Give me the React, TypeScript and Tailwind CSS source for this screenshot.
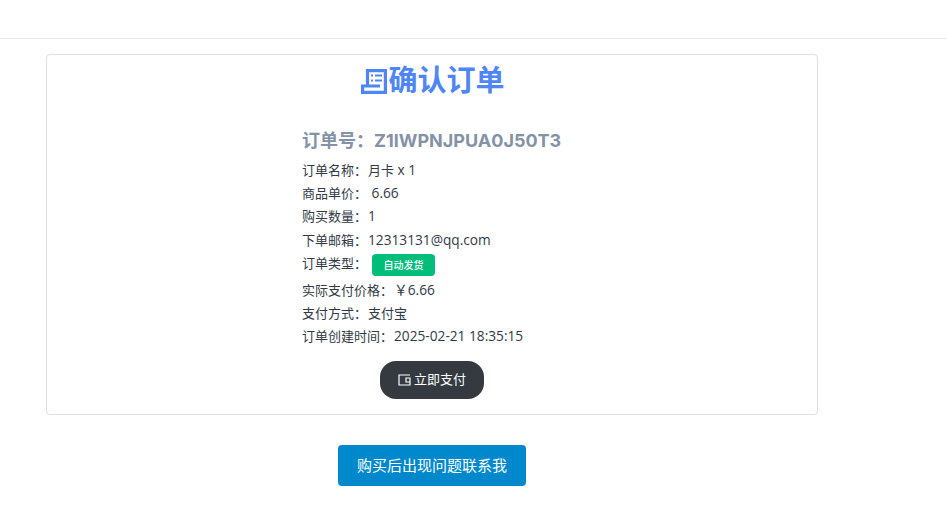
const FONT = "font-['Inter','Noto_Sans_CJK_SC',sans-serif]";
const VALUE = "font-['Open_Sans','Noto_Sans_CJK_SC',sans-serif] text-[13.7px] leading-none";

const rows = [
  { label: "订单名称：", value: <>月卡<span className={VALUE}> x 1</span></> },
  { label: "商品单价：", value: <span className={VALUE}>{"\u00a06.66"}</span> },
  { label: "购买数量：", value: <span className={VALUE}>1</span> },
  { label: "下单邮箱：", value: <span className={VALUE}>12313131@qq.com</span> },
];

const rowsAfter = [
  { label: "实际支付价格：", value: <span className={VALUE}>￥6.66</span> },
  { label: "支付方式：", value: "支付宝" },
  { label: "订单创建时间：", value: <span className={VALUE}>2025-02-21 18:35:15</span> },
];

/* receipt icon beside the title */
const ReceiptIcon = () => (
  <svg width="26" height="25" viewBox="0 0 26 25" fill="none" stroke="#4f86f7" strokeWidth="3.2" className="mr-[1px]">
    <path d="M6.5 17V1.6H24.4V23.4H1.6V17H19" />
    <path d="M10 6.5H12M14 6.5H21M10 11.5H12M14 11.5H21" strokeWidth="2.2" />
  </svg>
);

const WalletIcon = () => (
  <svg width="13" height="12" viewBox="0 0 13 12" fill="none" stroke="#fff" strokeWidth="1.2" className="mr-[3px]">
    <path d="M12 1H1V11H12V4H8V8H12" />
  </svg>
);

export default function App() {
  return (
    <div className={`${FONT} min-h-[530px] bg-white text-[13px] leading-[23.24px] text-[#313a46]`}>
      <div className="h-[39px] border-b border-[#ebebeb]" />
      <div className="pl-[46px] pt-[15px]">
        <div className="flex h-[361px] w-[772px] flex-col items-center rounded-[4px] border border-[#dfdfdf]">
          <h1 className="mt-[5px] ml-[2px] flex h-[42px] items-center text-[29px] font-bold text-[#4f86f7]">
            <ReceiptIcon />
            确认订单
          </h1>
          <div className="mt-[25px] ml-[255px] w-[260px] self-start">
            <h3 className="mb-[5px] text-[18px] leading-[27px] font-bold text-[#8392a5]">
              订单号：Z1IWPNJPUA0J50T3
            </h3>
            {rows.map((r) => (
              <p key={r.label} className="whitespace-nowrap">
                {r.label}
                <span className="ml-[1px]">{r.value}</span>
              </p>
            ))}
            <div className="flex h-[27px] items-center whitespace-nowrap">
              <span className="mb-[4px]">订单类型：</span>
              <span className="ml-[5px] flex h-[22px] w-[63px] items-center justify-center rounded-[4px] bg-[#00bd7a] text-[10px] font-medium text-white">
                自动发货
              </span>
            </div>
            {rowsAfter.map((r) => (
              <p key={r.label} className="whitespace-nowrap">
                {r.label}
                <span className="ml-[1px]">{r.value}</span>
              </p>
            ))}
          </div>
          <button className="mt-[12px] flex h-[38px] w-[104px] items-center justify-center rounded-[16px] bg-[#343a40] text-[13px] text-white">
            <WalletIcon />
            立即支付
          </button>
        </div>
        <button className="mt-[30px] ml-[292px] flex h-[41px] w-[188px] items-center justify-center rounded-[4px] bg-[#0088cc] text-[15px] text-white">
          购买后出现问题联系我
        </button>
      </div>
    </div>
  );
}
